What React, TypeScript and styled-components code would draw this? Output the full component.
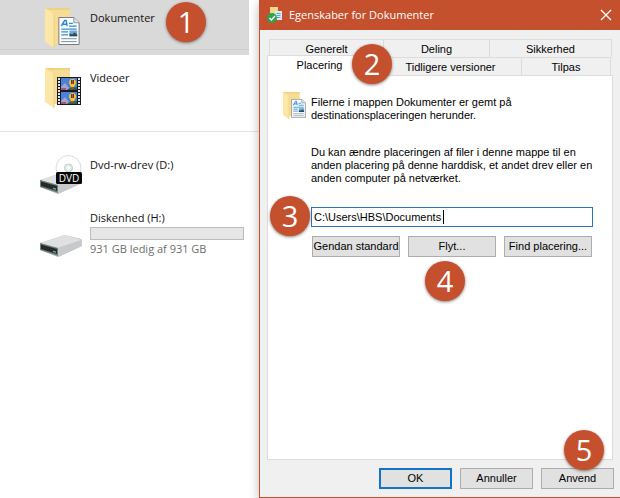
import React from "react";
import styled, { createGlobalStyle, css } from "styled-components";

const GlobalStyle = createGlobalStyle`
  *, *::before, *::after { box-sizing: border-box; }
  body { margin: 0; background: #fff; }
`;

const shellFont = `"Open Sans", "Noto Sans", sans-serif`;
const dialogFont = `"Liberation Sans", Arial, sans-serif`;

const Page = styled.div`
  display: grid;
  grid-template-columns: 259px minmax(0, 1fr);
  min-height: 100vh;
  color: #000;
  font-family: ${shellFont};
`;

/* ---------- Numbered callouts ---------- */

const Badge = styled.span<{ $top: number; $left: number }>`
  position: absolute;
  z-index: 2;
  top: ${(p) => p.$top}px;
  left: ${(p) => p.$left}px;
  width: 40px;
  height: 40px;
  border-radius: 50%;
  background: #c5502d;
  box-shadow: 0 1px 3px rgba(70, 50, 45, 0.65);
  color: #fff;
  font: 29px/40px ${shellFont};
  text-align: center;
  pointer-events: none;
`;

/* ---------- File list ---------- */

const Sidebar = styled.nav`
  background: #fff;
`;

const Group = styled.div`
  display: flex;
  flex-direction: column;
  gap: 5px;
  padding-right: 10px;
`;

const Drives = styled(Group)`
  margin-top: 11px;
  padding-top: 15px;
  border-top: 1px solid #e4e4e4;
`;

const Item = styled.a<{ $selected?: boolean; $height: number }>`
  position: relative;
  display: flex;
  align-items: flex-start;
  gap: 8px;
  min-height: ${(p) => p.$height}px;
  padding: 8px 0 0 38px;
  color: #111;
  font-size: 11px;
  line-height: 16px;
  text-decoration: none;
  ${(p) =>
    p.$selected &&
    css`
      background: linear-gradient(#d9d9d9 49px, #cecece 49px, #cecece 50px, #d9d9d9 50px);
    `}
`;

const ItemIcon = styled.svg<{ $low?: boolean }>`
  flex: none;
  align-self: ${(p) => (p.$low ? "flex-end" : "flex-start")};
  width: 44px;
  height: 40px;
`;

const ItemBody = styled.span`
  display: flex;
  flex: 1;
  flex-direction: column;
  min-width: 0;
  padding: 2px 5px 0 0;
`;

const Capacity = styled.span`
  height: 13px;
  margin: 1px 0;
  border: 1px solid #bcbcbc;
  background: #e6e6e6;
`;

const Note = styled.span`
  color: #6d6d6d;
`;

/* ---------- Dialog ---------- */

const Dialog = styled.section`
  position: relative;
  display: flex;
  flex-direction: column;
  min-width: 0;
  border: solid #c5502d;
  border-width: 0 0 1px 1px;
  background: #f0f0f0;
  box-shadow: 0 4px 10px rgba(0, 0, 0, 0.28);
  font: 11px/13px ${dialogFont};
`;

const TitleBar = styled.header`
  display: flex;
  align-items: center;
  height: 30px;
  padding: 0 8px 0 7px;
  background: #c5502d;
  color: #fff;
`;

const TitleIcon = styled.svg`
  width: 16px;
  height: 16px;
`;

const Title = styled.h1`
  flex: 1;
  margin: 0 0 0 6px;
  font: 11px/16px ${shellFont};
`;

const CloseButton = styled.button`
  display: flex;
  padding: 0;
  border: 0;
  background: none;
  color: #fff;

  svg { width: 12px; height: 12px; }
`;

const TabArea = styled.div`
  display: flex;
  flex: 1;
  flex-direction: column;
  padding: 9px 7px 0;
`;

const TabRow = styled.div<{ $columns: string; $front?: boolean }>`
  position: relative;
  display: grid;
  grid-template-columns: ${(p) => p.$columns};
  height: 18px;
  padding: ${(p) => (p.$front ? "0 2px 0 0" : "0 1px 0 2px")};
`;

const Tab = styled.button<{ $active?: boolean }>`
  min-width: 0;
  padding: 2px 0 0;
  border: solid #dcdcdc;
  border-width: 1px 1px 0 0;
  background: #f0f0f0;
  color: #000;
  font: inherit;
  text-align: center;

  &:first-child { border-left-width: 1px; }

  ${(p) =>
    p.$active &&
    css`
      z-index: 1;
      margin: -2px 0 -1px;
      padding: 0 8px 2px 0;
      background: #fff;
    `}
`;

const Panel = styled.div`
  display: flex;
  flex: 1;
  flex-direction: column;
  gap: 9px;
  padding: 16px 19px 16px 14px;
  border: 1px solid #dcdcdc;
  background: #fff;
`;

const Intro = styled.div`
  display: flex;
  gap: 3px;
  min-height: 45px;
`;

const IntroIcon = styled.svg`
  flex: none;
  width: 26px;
  height: 28px;
`;

const Text = styled.p`
  margin: 0;
  padding-top: 4px;
`;

const Form = styled.form`
  display: flex;
  flex-direction: column;
  margin-left: 29px;
`;

const PathLabel = styled.label`
  margin-bottom: 22px;
`;

const PathField = styled.div`
  position: relative;
  margin-bottom: 9px;
`;

const PathInput = styled.input`
  display: block;
  width: 100%;
  height: 20px;
  padding: 0 2px;
  border: 1px solid #2a76b8;
  border-radius: 0;
  outline: 0;
  background: #fff;
  color: #000;
  font: inherit;
`;

const Caret = styled.span`
  position: absolute;
  top: 3px;
  left: 132px;
  width: 1px;
  height: 14px;
  background: #000;
`;

const Actions = styled.div`
  display: grid;
  grid-template-columns: repeat(3, minmax(0, 1fr));
  gap: 8px;
  padding: 0 1px;
`;

const Slot = styled.div`
  position: relative;
  display: grid;
`;

const PushButton = styled.button<{ $primary?: boolean }>`
  height: 21px;
  padding: 0;
  border: ${(p) => (p.$primary ? "2px solid #1473c5" : "1px solid #adadad")};
  border-radius: 0;
  background: #e1e1e1;
  color: #000;
  font: inherit;
  white-space: nowrap;
`;

const Footer = styled.footer`
  display: grid;
  grid-template-columns: repeat(3, 73px);
  justify-content: end;
  gap: 8px;
  padding: 8px 6px 8px;
`;

/* ---------- Drawings ---------- */

function Defs() {
  return (
    <svg width="0" height="0" aria-hidden="true" display="none">
      <symbol id="folder" viewBox="0 0 26 40">
        <path d="M1 0H26V36H4z" fill="#f6dc94" />
        <path d="M1 0H26V2H1z" fill="#efd183" />
        <path d="M1 0L10 6V40L1 34z" fill="#fce7a6" />
        <path d="M10 6V40" fill="none" stroke="#efd183" />
      </symbol>
      <symbol id="page" viewBox="0 0 22 29">
        <path d="M.5.5H16L21.500 6V28.500H.5z" fill="#fdfeff" stroke="#71777d" />
        <path d="M16 .5V6h5.500" fill="#dce3e8" stroke="#8b9298" />
        <path d="M3 9.500L6.500 3.500h1.500l1 6M4.500 7.500h4" fill="none" stroke="#2586cf" strokeWidth="1.500" />
        <path d="M11 6.500h4M11 9.500h8M3 12.500h16M3 15.500h7M3 18.500h7" stroke="#318fce" strokeWidth="1.300" />
        <path d="M11.500 14h8v6h-8z" fill="#6ba9d8" />
        <path d="M11.500 20v-3l3 1 2-2 3 2v2z" fill="#344a59" />
        <path d="M3 22.500h16M3 25.500h16" stroke="#718ca0" />
      </symbol>
      <symbol id="drive" viewBox="0 0 42 22">
        <path d="M0 8L25 0L41 4Q42 5 42 6V11L18 22L0 15z" fill="#b9bdbd" />
        <path d="M0 8L25 0L42 5L18 13z" fill="#dfe1e1" />
        <path d="M18 13L42 5V11L18 22z" fill="#c6caca" />
        <path d="M0 8L18 13V21L0 15z" fill="#777c7c" />
        <path d="M1 9.500L17 14V19L1 14z" fill="#232b2b" />
        <path d="M13 15.500l3 1v1.500l-3-1z" fill="#55b09b" />
      </symbol>
      <linearGradient id="disc" x1="0" y1="0" x2="1" y2="1">
        <stop offset="0" stopColor="#dce1e1" />
        <stop offset=".4" stopColor="#c4dcd6" />
        <stop offset=".6" stopColor="#e6ecea" />
        <stop offset="1" stopColor="#b9c4c2" />
      </linearGradient>
    </svg>
  );
}

function DocumentsIcon() {
  return (
    <ItemIcon viewBox="0 0 44 40" aria-hidden="true">
      <use href="#folder" x="6" y="0" width="26" height="40" />
      <use href="#page" x="20" y="9" width="22" height="28" />
    </ItemIcon>
  );
}

function FilmFrame({ y }: { y: number }) {
  return (
    <g transform={`translate(23 ${y})`}>
      <path d="M0 0h16v12H0z" fill="#4c80dc" />
      <path d="M0 9l4-4 4 5-2 2H0z" fill="#a2a4c9" />
      <path d="M0 10h5v2H0z" fill="#b5506a" />
      <path d="M8 5q0-4 3.500-4t3.500 4l-2 4h-3z" fill="#f4ca22" />
      <path d="M10 2h3v4h-3z" fill="#54402a" />
      <path d="M11 2h1v4h-1z" fill="#d8452b" />
      <path d="M6 12l3-2 7-1v3z" fill="#2a6440" />
      <path d="M10 9h3v2h-3z" fill="#b9402e" />
    </g>
  );
}

function VideosIcon() {
  return (
    <ItemIcon viewBox="0 0 44 40" aria-hidden="true">
      <use href="#folder" x="6" y="0" width="26" height="40" />
      <path d="M19 9H43V37H19z" fill="#171b22" />
      <FilmFrame y={10} />
      <FilmFrame y={24} />
      <path d="M21 10V37M41 10V37" stroke="#e3e5e8" strokeWidth="2" strokeDasharray="2 1" />
    </ItemIcon>
  );
}

function DvdIcon() {
  return (
    <ItemIcon viewBox="0 0 44 40" aria-hidden="true">
      <use href="#drive" x="2" y="17" width="42" height="22" />
      <circle cx="30.500" cy="13" r="12.500" fill="url(#disc)" stroke="#c7cecd" strokeWidth=".7" />
      <circle cx="30.500" cy="13" r="4" fill="#e7eeec" stroke="#bccbc7" />
      <circle cx="30.500" cy="13" r="1.500" fill="#fff" />
      <rect x="18" y="17" width="26" height="12" rx="1.500" fill="#080808" />
      <text x="31" y="27" textAnchor="middle" fontFamily="Open Sans, sans-serif" fontSize="10" fill="#fff">
        DVD
      </text>
    </ItemIcon>
  );
}

function DiskIcon() {
  return (
    <ItemIcon $low viewBox="0 0 44 40" aria-hidden="true">
      <use href="#drive" x="2" y="18" width="42" height="22" />
    </ItemIcon>
  );
}

/* ---------- Screen ---------- */

export default function App() {
  return (
    <>
      <GlobalStyle />
      <Defs />
      <Page>
        <Sidebar aria-label="Mapper og drev">
          <Group>
            <Item href="#dokumenter" $selected $height={55} aria-current="true">
              <DocumentsIcon />
              <ItemBody>Dokumenter</ItemBody>
              <Badge $top={2} $left={166}>1</Badge>
            </Item>
            <Item href="#videoer" $height={60}>
              <VideosIcon />
              <ItemBody>Videoer</ItemBody>
            </Item>
          </Group>
          <Drives>
            <Item href="#d" $height={48}>
              <DvdIcon />
              <ItemBody>Dvd-rw-drev (D:)</ItemBody>
            </Item>
            <Item href="#h" $height={48}>
              <DiskIcon />
              <ItemBody>
                Diskenhed (H:)
                <Capacity />
                <Note>931 GB ledig af 931 GB</Note>
              </ItemBody>
            </Item>
          </Drives>
        </Sidebar>

        <Dialog role="dialog" aria-labelledby="dialog-title">
          <TitleBar>
            <TitleIcon viewBox="0 0 16 16" aria-hidden="true">
              <path d="M3 0h8v13H3z" fill="#f4d98c" />
              <path d="M8 4h7v9H8z" fill="#dbeaf5" />
              <path d="M9.500 6.500h4M9.500 8.500h4M9.500 10.500h4" stroke="#5aa2d4" />
              <circle cx="5" cy="11" r="5" fill="#2ca34a" />
              <path d="M2.500 11l2 2 3.500-4" fill="none" stroke="#fff" strokeWidth="1.500" />
            </TitleIcon>
            <Title id="dialog-title">Egenskaber for Dokumenter</Title>
            <CloseButton type="button" aria-label="Luk">
              <svg viewBox="0 0 12 12" aria-hidden="true">
                <path d="M1 1l10 10M11 1L1 11" stroke="currentColor" strokeWidth="1.300" />
              </svg>
            </CloseButton>
          </TitleBar>

          <TabArea>
            <div role="tablist" aria-label="Egenskaber">
              <TabRow $columns="115fr 106fr 122fr">
                <Tab type="button" role="tab">Generelt</Tab>
                <Tab type="button" role="tab">Deling</Tab>
                <Tab type="button" role="tab">Sikkerhed</Tab>
              </TabRow>
              <TabRow $front $columns="113fr 142fr 89fr">
                <Tab type="button" role="tab" id="tab-location" $active aria-selected="true">
                  Placering
                </Tab>
                <Tab type="button" role="tab">Tidligere versioner</Tab>
                <Tab type="button" role="tab">Tilpas</Tab>
                <Badge $top={-13} $left={85}>2</Badge>
              </TabRow>
            </div>
            <Panel role="tabpanel" aria-labelledby="tab-location">
              <Intro>
                <IntroIcon viewBox="0 0 26 28" aria-hidden="true">
                  <use href="#folder" x="0" y="0" width="18" height="27" />
                  <use href="#page" x="9" y="7" width="15" height="19" />
                </IntroIcon>
                <Text>
                  Filerne i mappen Dokumenter er gemt på
                  <br />
                  destinationsplaceringen herunder.
                </Text>
              </Intro>
              <Form onSubmit={(e) => e.preventDefault()}>
                <PathLabel htmlFor="path">
                  Du kan ændre placeringen af filer i denne mappe til en
                  <br />
                  anden placering på denne harddisk, et andet drev eller en
                  <br />
                  anden computer på netværket.
                </PathLabel>
                <PathField>
                  <PathInput id="path" type="text" defaultValue="C:\Users\HBS\Documents" />
                  <Caret />
                  <Badge $top={-11} $left={-41}>3</Badge>
                </PathField>
                <Actions>
                  <PushButton type="button">Gendan standard</PushButton>
                  <Slot>
                    <PushButton type="button">Flyt...</PushButton>
                    <Badge $top={25} $left={17}>4</Badge>
                  </Slot>
                  <PushButton type="button">Find placering...</PushButton>
                </Actions>
              </Form>
            </Panel>
          </TabArea>

          <Footer>
            <PushButton type="button" $primary>OK</PushButton>
            <PushButton type="button">Annuller</PushButton>
            <Slot>
              <PushButton type="button">Anvend</PushButton>
              <Badge $top={-38} $left={23}>5</Badge>
            </Slot>
          </Footer>
        </Dialog>
      </Page>
    </>
  );
}
